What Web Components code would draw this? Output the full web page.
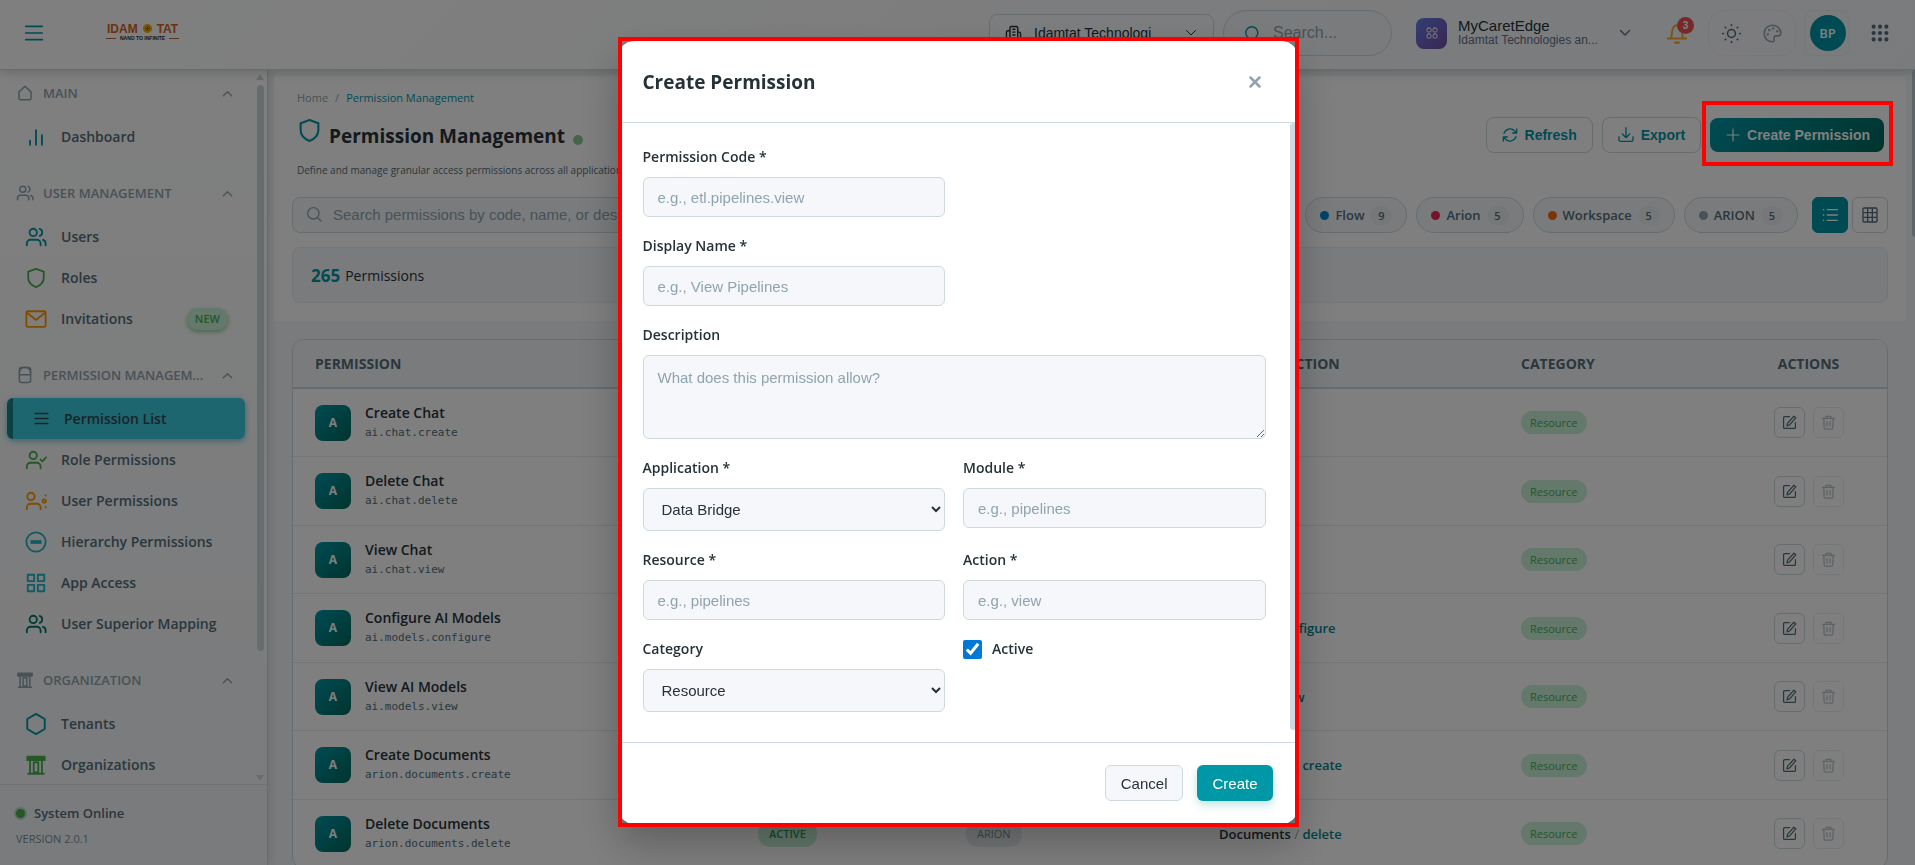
<!DOCTYPE html>
<html lang="en">
<head>
<meta charset="utf-8">
<meta name="viewport" content="width=device-width, initial-scale=1">
<title>Permission Management</title>
<style>
    :root {
        --font-ui: "Open Sans", "Noto Sans", sans-serif;
        --font-control: "Liberation Sans", Arial, sans-serif;
        --teal: #0097a7;
        --teal-dark: #00695c;
        --ink: #263238;
        --muted: #546e7a;
        --soft: #90a4ae;
        --line: #cfd8dc;
        --surface: #f5f7fa;
        --green: #4caf50;
        --mint: #c8f0d8;
    }

    body {
        margin: 0;
        height: 100vh;
        overflow: hidden;
        font-family: var(--font-ui);
        font-size: 14px;
        color: var(--ink);
    }
</style>
</head>
<body>
<permission-app></permission-app>

<script>
// Shared icon set, all drawn on a 24x24 grid
const ICONS = {
    home: '<path d="M4 10.5 12 3l8 7.5V19a2 2 0 0 1-2 2H6a2 2 0 0 1-2-2z"/>',
    users: '<circle cx="9" cy="7" r="4"/><path d="M2 21v-2a4 4 0 0 1 4-4h7a4 4 0 0 1 4 4v2M16 3.200a4 4 0 0 1 0 7.600M22.500 21v-2a4 4 0 0 0-3-3.800"/>',
    userCheck: '<circle cx="9" cy="7" r="4"/><path d="M2 21v-2a4 4 0 0 1 4-4h7a4 4 0 0 1 4 4v2M17 11.500l2 2 4-4.500"/>',
    userGear: '<circle cx="6.500" cy="7" r="4"/><path d="M2 21v-2a4 4 0 0 1 4-4h7a4 4 0 0 1 4 4v2"/><circle cx="21" cy="12" r="1.800"/><path d="M22.500 5.500v.5M22.500 18.500v.5"/>',
    bars: '<path d="M5.500 16v4.500M12 4.500v16M18.500 10v10.500"/>',
    shield: '<path d="M12 2 3.500 5v6.500c0 5 3.500 8.500 8.500 10.500 5-2 8.500-5.500 8.500-10.500V5z"/>',
    mail: '<rect x="1.500" y="3.500" width="21" height="17" rx="1.500"/><path d="m2 5 10 8 10-8"/>',
    lock: '<rect x="4.500" y="2" width="15" height="20" rx="3"/><path d="M4.500 11.500h15M4.500 9a7 7 0 0 1 15 0"/>',
    list: '<path d="M3 5h18M3 12h18M3 19h18"/>',
    minusCircle: '<circle cx="12" cy="12" r="10.500"/><path d="M6 12h12" stroke-width="4" stroke-linecap="butt"/>',
    apps: '<path d="M3 3h7v7H3zM14 3h7v7h-7zM3 14h7v7H3zM14 14h7v7h-7z"/>',
    roundApps: '<rect x="2" y="2" width="8" height="8" rx="2.500"/><rect x="14" y="2" width="8" height="8" rx="2.500"/><rect x="2" y="14" width="8" height="8" rx="2.500"/><rect x="14" y="14" width="8" height="8" rx="2.500"/>',
    pillars: '<path d="M2.500 3h19v3.500h-19zM5.500 7v14M18.500 7v14M9.500 9h5v11h-5zM3.500 21.500h17M3 5h18"/>',
    hexagon: '<path d="M12 1 21.500 6.500v11L12 23l-9.500-5.500v-11z"/>',
    up: '<path d="m3 17 9-9 9 9"/>',
    down: '<path d="m3 7 9 9 9-9"/>',
    menu: '<path d="M2 4h20M2 12h20M2 20h20"/>',
    search: '<circle cx="11" cy="11" r="8.500"/><path d="m17.500 17.500 5 5"/>',
    building: '<path d="M7 22V4a2 2 0 0 1 2-2h7a2 2 0 0 1 2 2v18M7 8H4a2 2 0 0 0-2 2v12h20V12a2 2 0 0 0-2-2h-2M11 6h3M11 10h3M11 14h3M11 22v-4h3v4"/>',
    bell: '<path d="M2 18h20M5 18c2-3 1-6 2-9.500C8 5 10 3.500 12 3.500s4 1.500 5 5c1 3.500 0 6.500 2 9.500"/><path d="M10 22.500h4" stroke-width="2.500"/>',
    sun: '<circle cx="12" cy="12" r="5"/><path d="M12 1v.6M12 22.400v.6M1 12h.6M22.400 12h.6M4.200 4.200l.4.4M19.400 19.400l.4.4M4.200 19.800l.4-.4M19.400 4.600l.4-.4" stroke-width="2.200"/>',
    palette: '<path d="M12 1.500C6 1.500 1.500 6 1.500 12S6 22.500 12 22.500c2 0 2.500-1.500 2-3-.8-2.500.5-4.500 3-4.500h2.500c2 0 3-1.300 3-3.500 0-5.500-4.500-10-10.500-10z"/><path d="M6 13v.1M8 7.500v.1M13 5.500v.1M18 9v.1" stroke-width="3"/>',
    dots: '<path d="M3.500 3.500v.01M12 3.500v.01M20.500 3.500v.01M3.500 12v.01M12 12v.01M20.500 12v.01M3.500 20.500v.01M12 20.500v.01M20.500 20.500v.01" stroke-width="5.500"/>',
    refresh: '<path d="M22 3v6h-6M2 21v-6h6M3 9.500a9.500 9.500 0 0 1 16-3.500l3 3M21 14.500A9.500 9.500 0 0 1 5 18l-3-3"/>',
    download: '<path d="M1.500 14.500V19a2.500 2.500 0 0 0 2.500 2.500h16a2.500 2.500 0 0 0 2.500-2.500v-4.500M12 1v15M6.500 10.500 12 16l5.500-5.500"/>',
    plus: '<path d="M12 2v20M2 12h20"/>',
    bullets: '<path d="M8 4h15M8 12h15M8 20h15M2 4h.6M2 12h.6M2 20h.6"/>',
    grid: '<path d="M3 1.500h18A1.500 1.500 0 0 1 22.500 3v18a1.500 1.500 0 0 1-1.500 1.500H3A1.500 1.500 0 0 1 1.500 21V3A1.500 1.500 0 0 1 3 1.500zM1.500 8.500h21M1.500 15.500h21M8.500 1.500v21M15.500 1.500v21"/>',
    edit: '<path d="M12 2.500H4.500a2 2 0 0 0-2 2v15a2 2 0 0 0 2 2h15a2 2 0 0 0 2-2V12M19 2l3 2.500L12 16l-4 1.500L9 13z"/>',
    trash: '<path d="M2.500 5.500h19M8 5V2h8v3M4.500 6l.5 14.500a2 2 0 0 0 2 2h10a2 2 0 0 0 2-2L19.500 6M9.500 10.500v7M14.500 10.500v7"/>',
    close: '<path d="m3 3 18 18M21 3 3 21"/>',
    flower: '<circle cx="12" cy="12" r="7" fill="#ffc107" stroke="#ffb300" stroke-width="6" stroke-dasharray="4 1.500"/><circle cx="12" cy="12" r="5" stroke="#b8860b" stroke-width="2"/><path d="M12 9v6M9 12h6" stroke="#8d5a00"/>'
};

class UiIcon extends HTMLElement {
    constructor() {
        super();
        this.attachShadow({ mode: 'open' });
        const weight = this.getAttribute('weight') || 2;
        this.shadowRoot.innerHTML = `
            <style>
                :host { display: inline-flex; flex: none; width: var(--icon-size, 20px); height: var(--icon-size, 20px); }
                svg { width: 100%; height: 100%; overflow: visible; }
            </style>
            <svg viewBox="0 0 24 24" fill="none" stroke="currentColor" stroke-width="${weight}" stroke-linecap="round" stroke-linejoin="round" aria-hidden="true">${ICONS[this.getAttribute('name')] || ''}</svg>
        `;
    }
}

class AppHeader extends HTMLElement {
    constructor() {
        super();
        this.attachShadow({ mode: 'open' });
        this.shadowRoot.innerHTML = `
            <style>
                :host {
                    display: block;
                    position: relative;
                    z-index: 2;
                    background: linear-gradient(135deg, #fff, #f5f7fa);
                    border-bottom: 1px solid var(--line);
                    box-shadow: 0 2px 10px rgba(38, 50, 56, .24);
                }
                header {
                    display: flex;
                    align-items: center;
                    gap: 9px;
                    height: 69px;
                    padding: 0 14px 3px 24px;
                    box-sizing: border-box;
                    font-family: var(--font-control);
                }
                button { background: none; border: 0; padding: 0; font: inherit; color: inherit; }
                .menu { --icon-size: 20px; display: flex; color: var(--teal); }
                .logo { display: grid; justify-items: center; margin: 0 auto 4px 53px; color: #d8651f; text-decoration: none; }
                .logo-name { display: flex; align-items: center; gap: 4px; font-size: 12px; line-height: 14px; font-weight: 700; --icon-size: 11px; }
                .logo-sub { display: flex; align-items: center; gap: 4px; font-size: 5px; line-height: 5px; font-weight: 700; color: var(--ink); }
                .logo-sub::before, .logo-sub::after { content: ""; width: 10px; height: 1px; background: #b06a3b; }
                .org { display: flex; align-items: center; gap: 12px; width: 225px; height: 38px; box-sizing: border-box; padding: 0 16px 0 15px; border: 1px solid var(--line); border-radius: 8px; --icon-size: 17px; }
                .org select { flex: 1; min-width: 0; appearance: none; border: 0; padding: 0; background: none; font: 14px var(--font-control); color: var(--ink); }
                .org ui-icon:last-child, .app ui-icon:last-child { --icon-size: 12px; }
                .search { display: flex; align-items: center; gap: 12px; width: 169px; height: 46px; box-sizing: border-box; padding: 0 20px; border: 1px solid var(--line); border-radius: 23px; background: var(--surface); color: var(--teal); --icon-size: 17px; }
                .search input { flex: 1; min-width: 0; border: 0; padding: 0; background: none; font: 16px var(--font-control); }
                .search input::placeholder { color: var(--soft); }
                .app { display: flex; align-items: center; gap: 11px; width: 244px; padding: 0 14px 0 15px; text-align: left; color: #64748b; }
                .app-mark { display: grid; place-items: center; width: 31px; height: 31px; border-radius: 8px; background: linear-gradient(135deg, #667eea, #764ba2); color: #fff; --icon-size: 16px; }
                .app-text { flex: 1; min-width: 0; font-size: 12px; line-height: 15px; }
                .app-text strong { display: block; font-size: 15px; font-weight: 400; color: var(--ink); }
                .bell { position: relative; display: grid; place-items: center; width: 45px; height: 46px; color: #ffa726; --icon-size: 22px; }
                .badge { position: absolute; top: 7px; right: 5px; width: 17px; height: 17px; border-radius: 50%; background: #ef5350; color: #fff; font-size: 10px; line-height: 17px; font-weight: 700; text-align: center; }
                .tools { display: flex; align-items: center; justify-content: center; gap: 22px; width: 88px; height: 46px; box-sizing: border-box; border: 1px solid #eceff1; border-radius: 16px; color: var(--muted); --icon-size: 19px; }
                .tools button { display: flex; }
                .tools button:last-child { color: var(--soft); }
                .profile { display: grid; place-items: center; width: 45px; height: 46px; box-sizing: border-box; border: 1px solid #eceff1; border-radius: 8px; }
                .avatar { width: 36px; height: 36px; border-radius: 50%; background: var(--teal); color: #fff; font: 600 13px/36px var(--font-ui); text-align: center; }
                .more { display: grid; place-items: center; width: 42px; color: var(--muted); --icon-size: 18px; }
            </style>
            <header>
                <button class="menu" aria-label="Toggle menu"><ui-icon name="menu"></ui-icon></button>
                <a class="logo" href="#">
                    <span class="logo-name">IDAM <ui-icon name="flower"></ui-icon> TAT</span>
                    <span class="logo-sub">NANO TO INFINITE</span>
                </a>
                <div class="org">
                    <ui-icon name="building"></ui-icon>
                    <select aria-label="Organization"><option>Idamtat Technologi</option></select>
                    <ui-icon name="down"></ui-icon>
                </div>
                <div class="search">
                    <ui-icon name="search"></ui-icon>
                    <input type="search" placeholder="Search..." aria-label="Search">
                </div>
                <button class="app">
                    <span class="app-mark"><ui-icon name="roundApps"></ui-icon></span>
                    <span class="app-text"><strong>MyCaretEdge</strong>Idamtat Technologies an...</span>
                    <ui-icon name="down" weight="3"></ui-icon>
                </button>
                <button class="bell" aria-label="Notifications"><ui-icon name="bell"></ui-icon><span class="badge">3</span></button>
                <div class="tools">
                    <button aria-label="Light mode"><ui-icon name="sun"></ui-icon></button>
                    <button aria-label="Theme colours"><ui-icon name="palette"></ui-icon></button>
                </div>
                <button class="profile"><span class="avatar">BP</span></button>
                <button class="more" aria-label="Apps"><ui-icon name="dots"></ui-icon></button>
            </header>
        `;
    }
}

class NavSection extends HTMLElement {
    constructor() {
        super();
        this.attachShadow({ mode: 'open' });
        this.shadowRoot.innerHTML = `
            <style>
                :host { display: block; margin-bottom: 18px; }
                button {
                    display: flex;
                    align-items: center;
                    gap: 9px;
                    width: 100%;
                    height: 36px;
                    margin-bottom: 5px;
                    padding: 0 23px 0 16px;
                    border: 0;
                    background: none;
                    font: 600 13px var(--font-ui);
                    color: var(--soft);
                    text-align: left;
                    --icon-size: 18px;
                }
                span { flex: 1; min-width: 0; white-space: nowrap; }
                ui-icon:last-child { --icon-size: 11px; }
            </style>
            <button aria-expanded="true">
                <ui-icon name="${this.getAttribute('icon')}"></ui-icon>
                <span>${this.getAttribute('label')}</span>
                <ui-icon name="up" weight="3"></ui-icon>
            </button>
            <slot></slot>
        `;
    }
}

class NavItem extends HTMLElement {
    constructor() {
        super();
        this.attachShadow({ mode: 'open' });
        this.shadowRoot.innerHTML = `
            <style>
                :host { display: block; }
                a {
                    display: flex;
                    align-items: center;
                    gap: 14px;
                    height: 41px;
                    padding: 0 28px 0 25px;
                    color: var(--muted);
                    text-decoration: none;
                    font-weight: 600;
                    --icon-size: 22px;
                }
                ui-icon { color: var(--tint, var(--teal)); }
                span { flex: 1; white-space: nowrap; }
                :host([active]) a {
                    margin: 0 11px 0 7px;
                    padding: 0 20px;
                    border-left: 6px solid #16858c;
                    border-radius: 6px;
                    background: #3acbde;
                    box-shadow: 0 2px 6px rgba(0, 151, 167, .5);
                    color: #37474f;
                    box-sizing: border-box;
                    --icon-size: 17px;
                    --tint: #37474f;
                }
            </style>
            <a href="#">
                <ui-icon name="${this.getAttribute('icon')}"></ui-icon>
                <span>${this.getAttribute('label')}</span>
                <slot></slot>
            </a>
        `;
    }
}

class AppSidebar extends HTMLElement {
    constructor() {
        super();
        this.attachShadow({ mode: 'open' });
        this.shadowRoot.innerHTML = `
            <style>
                :host {
                    display: flex;
                    flex-direction: column;
                    position: relative;
                    z-index: 1;
                    width: 268px;
                    box-sizing: border-box;
                    border-right: 1px solid var(--line);
                    background: linear-gradient(#fff, #f5f7fa);
                    box-shadow: 2px 0 8px rgba(38, 50, 56, .14);
                }
                .scroll { flex: 1; display: flex; min-height: 0; overflow: hidden; }
                nav { flex: 1; min-width: 0; padding-top: 5px; }
                /* Scroll track with its two arrows */
                .track { display: flex; flex-direction: column; flex: none; align-items: center; width: 8px; margin-right: 3px; padding: 4px 0 3px; }
                .arrow { border: 4px solid transparent; border-top-width: 0; border-bottom: 6px solid var(--line); }
                .arrow.down { border-bottom-width: 0; border-top: 6px solid var(--line); margin-top: auto; }
                .thumb { width: 7px; height: 80%; margin-top: 5px; border-radius: 4px; background: var(--line); }
                .new { padding: 0 8px; border-radius: 11px; background: var(--mint); box-shadow: 0 2px 4px rgba(76, 175, 80, .6); color: var(--green); font-size: 11px; line-height: 22px; font-weight: 600; }
                footer { height: 81px; box-sizing: border-box; padding: 15px 16px; border-top: 1px solid #e0e5e8; background: var(--surface); font-size: 11px; line-height: 26px; color: #78909c; }
                .status { display: flex; align-items: center; gap: 9px; font-size: 13px; font-weight: 600; color: var(--muted); }
                .status::before { content: ""; width: 9px; height: 9px; border-radius: 50%; background: var(--green); box-shadow: 0 0 0 2px #b9dfc0; }
            </style>
            <div class="scroll">
                <nav>
                    <nav-section icon="home" label="MAIN">
                        <nav-item icon="bars" label="Dashboard"></nav-item>
                    </nav-section>
                    <nav-section icon="users" label="USER MANAGEMENT">
                        <nav-item icon="users" label="Users"></nav-item>
                        <nav-item icon="shield" label="Roles" style="--tint: #4caf50"></nav-item>
                        <nav-item icon="mail" label="Invitations" style="--tint: #ff9800"><b class="new">NEW</b></nav-item>
                    </nav-section>
                    <nav-section icon="lock" label="PERMISSION MANAGEM...">
                        <nav-item active icon="list" label="Permission List"></nav-item>
                        <nav-item icon="userCheck" label="Role Permissions" style="--tint: #4caf50"></nav-item>
                        <nav-item icon="userGear" label="User Permissions" style="--tint: #ff9800"></nav-item>
                        <nav-item icon="minusCircle" label="Hierarchy Permissions" style="--tint: #26b6c8"></nav-item>
                        <nav-item icon="apps" label="App Access" style="--tint: #26b6c8"></nav-item>
                        <nav-item icon="users" label="User Superior Mapping" style="--tint: #00796b"></nav-item>
                    </nav-section>
                    <nav-section icon="pillars" label="ORGANIZATION">
                        <nav-item icon="hexagon" label="Tenants"></nav-item>
                        <nav-item icon="pillars" label="Organizations" style="--tint: #4caf50"></nav-item>
                    </nav-section>
                </nav>
                <div class="track" aria-hidden="true">
                    <i class="arrow"></i><i class="thumb"></i><i class="arrow down"></i>
                </div>
            </div>
            <footer>
                <div class="status">System Online</div>
                VERSION 2.0.1
            </footer>
        `;
    }
}

class PageHeader extends HTMLElement {
    constructor() {
        super();
        this.attachShadow({ mode: 'open' });
        const filters = [['Flow', 9, '#0288d1'], ['Arion', 5, '#e6294f'], ['Workspace', 5, '#f9690e'], ['ARION', 5, '#90a4ae']];
        this.shadowRoot.innerHTML = `
            <style>
                :host { display: block; padding: 14px 18px 18px; background: #fff; }
                .top { display: flex; align-items: center; gap: 9px; padding: 0 4px 0 5px; margin-bottom: 17px; }
                .heading { flex: 1; min-height: 90px; }
                .crumbs { display: flex; gap: 7px; font-size: 11px; line-height: 16px; color: var(--soft); }
                .crumbs a { color: inherit; text-decoration: none; }
                .crumbs b { font-weight: 500; color: var(--teal); }
                h1 { display: flex; gap: 7px; margin: 12px 0 8px; font-size: 19px; line-height: 36px; font-weight: 700; --icon-size: 25px; }
                h1 ui-icon { color: var(--teal); }
                h1::after { content: ""; align-self: center; width: 10px; height: 10px; margin: 7px 0 0 1px; border-radius: 50%; background: #8cc98f; }
                p { margin: 0; font-size: 10px; line-height: 16px; color: var(--muted); }
                button { font: 700 14px var(--font-control); }
                .action { display: flex; align-items: center; gap: 7px; height: 36px; padding: 0 15px; border: 1px solid var(--line); border-radius: 8px; background: #fff; color: var(--teal); --icon-size: 16px; }
                .create { position: relative; }
                .create .action { height: 34px; padding: 0 14px 0 16px; border: 0; background: linear-gradient(135deg, var(--teal), var(--teal-dark)); color: #fff; --icon-size: 14px; }
                .create highlight-frame { inset: -17px -9px -14px -8px; }
                .filters { display: flex; align-items: center; gap: 9px; margin-bottom: 14px; }
                .search { flex: 1; display: flex; align-items: center; gap: 11px; height: 36px; box-sizing: border-box; padding: 0 13px 2px; border: 1px solid var(--line); border-radius: 8px; background: var(--surface); color: var(--soft); --icon-size: 16px; }
                .search input { flex: 1; border: 0; padding: 0; background: none; font: 15px var(--font-control); }
                .search input::placeholder { color: var(--soft); }
                .pill { display: flex; align-items: center; gap: 6px; height: 36px; padding: 0 14px; border: 1px solid var(--line); border-radius: 18px; background: var(--surface); font: 600 13px var(--font-ui); color: var(--muted); }
                .pill i { width: 9px; height: 9px; border-radius: 50%; }
                .pill small { width: 22px; border-radius: 10px; background: #eceff1; font-size: 11px; line-height: 19px; text-align: center; }
                .view { display: flex; gap: 4px; margin-left: 5px; }
                .view button { display: grid; place-items: center; width: 36px; height: 36px; padding: 0; border: 1px solid var(--line); border-radius: 6px; background: #fff; color: var(--muted); --icon-size: 16px; }
                .view button:first-child { border-color: var(--teal); background: var(--teal); color: #fff; }
                .summary { display: flex; align-items: center; gap: 5px; height: 56px; box-sizing: border-box; padding: 0 18px; border: 1px solid #e8ecef; border-radius: 8px; background: var(--surface); font-weight: 500; }
                .summary b { font-size: 17px; color: var(--teal); }
            </style>
            <div class="top">
                <div class="heading">
                    <div class="crumbs"><a href="#">Home</a><span>/</span><b>Permission Management</b></div>
                    <h1><ui-icon name="shield"></ui-icon>Permission Management</h1>
                    <p>Define and manage granular access permissions across all applications</p>
                </div>
                <button class="action"><ui-icon name="refresh"></ui-icon>Refresh</button>
                <button class="action"><ui-icon name="download"></ui-icon>Export</button>
                <div class="create">
                    <button class="action"><ui-icon name="plus"></ui-icon>Create Permission</button>
                    <highlight-frame></highlight-frame>
                </div>
            </div>
            <div class="filters">
                <div class="search">
                    <ui-icon name="search"></ui-icon>
                    <input type="search" placeholder="Search permissions by code, name, or description..." aria-label="Search permissions">
                </div>
                ${filters.map(([name, count, color]) => `<button class="pill"><i style="background: ${color}"></i>${name} <small>${count}</small></button>`).join('')}
                <div class="view">
                    <button aria-label="List view"><ui-icon name="bullets"></ui-icon></button>
                    <button aria-label="Grid view"><ui-icon name="grid"></ui-icon></button>
                </div>
            </div>
            <div class="summary"><b>265</b> Permissions</div>
        `;
    }
}

class PermissionTable extends HTMLElement {
    constructor() {
        super();
        this.attachShadow({ mode: 'open' });
        const rows = [
            ['Create Chat', 'ai.chat.create', 'AI', 'Chat', 'create'],
            ['Delete Chat', 'ai.chat.delete', 'AI', 'Chat', 'delete'],
            ['View Chat', 'ai.chat.view', 'AI', 'Chat', 'view'],
            ['Configure AI Models', 'ai.models.configure', 'AI', 'Models', 'configure'],
            ['View AI Models', 'ai.models.view', 'AI', 'Models', 'view'],
            ['Create Documents', 'arion.documents.create', 'ARION', 'Documents', 'create'],
            ['Delete Documents', 'arion.documents.delete', 'ARION', 'Documents', 'delete']
        ];
        this.shadowRoot.innerHTML = `
            <style>
                :host { display: block; margin: 18px 18px 0; border: 1px solid var(--line); border-radius: 12px; background: #fff; overflow: hidden; }
                table { width: 100%; table-layout: fixed; border-collapse: separate; border-spacing: 0; }
                th, td { box-sizing: border-box; padding: 0 22px; text-align: left; white-space: nowrap; }
                th { height: 49px; border-bottom: 2px solid var(--line); background: var(--surface); font-size: 14px; font-weight: 700; color: var(--muted); }
                td { height: 68px; border-bottom: 1px solid #e6eaed; font-size: 13px; }
                tr:nth-child(even) td { height: 69px; }
                .app { width: 253px; }
                .state { width: 208px; }
                .path { width: 302px; }
                .category { width: 231px; }
                .actions { width: 157px; text-align: center; }
                .cell { display: flex; align-items: center; gap: 14px; }
                .mark { width: 36px; height: 36px; border-radius: 8px; background: linear-gradient(135deg, var(--teal), var(--teal-dark)); color: #fff; font-size: 12px; line-height: 36px; font-weight: 700; text-align: center; }
                .name { font-size: 14px; line-height: 20px; font-weight: 600; }
                code { display: block; font: 11px/20px "DejaVu Sans Mono", monospace; color: var(--muted); }
                .tag { display: inline-block; padding: 0 9px; border-radius: 12px; background: var(--mint); color: var(--green); font-size: 11px; line-height: 23px; }
                .tag.on { padding: 0 11px; color: #1f9a5b; font-weight: 600; line-height: 26px; }
                .tag.off { padding: 0 11px; background: #e9ecee; color: #78909c; line-height: 26px; }
                .path b { font-weight: 600; }
                .path span { color: var(--soft); }
                .path em { font-style: normal; font-weight: 600; color: #00838f; }
                .buttons { display: flex; justify-content: center; gap: 8px; }
                button { display: grid; place-items: center; width: 31px; height: 31px; padding: 0; border: 1px solid var(--line); border-radius: 6px; background: #fff; color: var(--muted); --icon-size: 15px; }
                button:disabled { opacity: .4; }
            </style>
            <table>
                <thead>
                    <tr><th>PERMISSION</th><th class="state">STATUS</th><th class="app">APPLICATION</th><th class="path">MODULE/ACTION</th><th class="category">CATEGORY</th><th class="actions">ACTIONS</th></tr>
                </thead>
                <tbody>
                    ${rows.map(([name, code, app, resource, action]) => `
                        <tr>
                            <td><div class="cell"><span class="mark">A</span><div><div class="name">${name}</div><code>${code}</code></div></div></td>
                            <td><span class="tag on">ACTIVE</span></td>
                            <td><span class="tag off">${app}</span></td>
                            <td class="path"><b>${resource}</b> <span>/</span> <em>${action}</em></td>
                            <td><span class="tag">Resource</span></td>
                            <td><div class="buttons">
                                <button aria-label="Edit ${name}"><ui-icon name="edit"></ui-icon></button>
                                <button disabled aria-label="Delete ${name}"><ui-icon name="trash"></ui-icon></button>
                            </div></td>
                        </tr>`).join('')}
                </tbody>
            </table>
        `;
    }
}

// Red callout drawn over whatever it wraps; the user sets its inset
class HighlightFrame extends HTMLElement {
    constructor() {
        super();
        this.attachShadow({ mode: 'open' });
        this.shadowRoot.innerHTML = `
            <style>
                :host { position: absolute; z-index: 20; border: 4px solid #f00; pointer-events: none; }
            </style>
        `;
    }
}

class PermissionDialog extends HTMLElement {
    constructor() {
        super();
        this.attachShadow({ mode: 'open' });
        this.shadowRoot.innerHTML = `
            <style>
                :host { position: fixed; inset: 0; z-index: 10; display: grid; place-items: center; background: rgba(0, 0, 0, .5); }
                .frame { position: relative; width: 680px; max-width: 100%; }
                highlight-frame { inset: -4px -1px -3px 0; }
                form { border: 1px solid #fff; border-radius: 16px; background: #fff; box-shadow: 0 20px 40px rgba(0, 0, 0, .25); overflow: hidden; }
                header { display: flex; align-items: center; justify-content: space-between; height: 80px; padding: 0 36px 0 24px; border-bottom: 1px solid var(--line); }
                h2 { margin: 0; font-size: 19px; line-height: 28px; font-weight: 700; }
                header button { display: flex; padding: 0; border: 0; background: none; color: var(--soft); --icon-size: 12px; }
                .body { display: flex; }
                .fields { flex: 1; display: grid; grid-template-columns: 1fr 1fr; gap: 19px 18px; align-items: start; padding: 24px 24px 30px; }
                .field { display: grid; gap: 10px; grid-column: 1; }
                .field.right { grid-column: 2; }
                .field.wide { grid-column: 1 / 3; }
                .bar { width: 7px; margin-bottom: 12px; border-radius: 4px; background: var(--line); }
                label { font-size: 14px; line-height: 20px; font-weight: 600; }
                input, textarea, select, footer button { font: 15px var(--font-control); color: var(--ink); }
                .field input, textarea, select { width: 100%; height: 40px; box-sizing: border-box; margin: 0; padding: 0 14px; border: 1px solid var(--line); border-radius: 6px; background: var(--surface); }
                .field select { height: 43px; }
                .field textarea { display: block; height: 84px; padding: 13px 14px; resize: vertical; }
                ::placeholder { color: var(--soft); }
                .check { display: flex; align-items: center; gap: 10px; grid-column: 2; }
                .check input { width: 19px; height: 19px; margin: 0; accent-color: #0078d7; }
                footer { display: flex; justify-content: flex-end; align-items: center; gap: 14px; height: 80px; padding: 0 24px; border-top: 1px solid var(--line); }
                footer button { height: 36px; padding: 0 15px; border: 1px solid var(--line); border-radius: 6px; background: var(--surface); }
                footer .primary { border: 0; background: var(--teal); box-shadow: 0 4px 8px rgba(0, 151, 167, .25); color: #fff; }
            </style>
            <div class="frame">
                <form role="dialog" aria-labelledby="title">
                    <header>
                        <h2 id="title">Create Permission</h2>
                        <button type="button" aria-label="Close"><ui-icon name="close" weight="5"></ui-icon></button>
                    </header>
                    <div class="body">
                        <div class="fields">
                            <div class="field"><label for="code">Permission Code *</label><input id="code" placeholder="e.g., etl.pipelines.view"></div>
                            <div class="field"><label for="name">Display Name *</label><input id="name" placeholder="e.g., View Pipelines"></div>
                            <div class="field wide"><label for="description">Description</label><textarea id="description" placeholder="What does this permission allow?"></textarea></div>
                            <div class="field"><label for="application">Application *</label><select id="application"><option>Data Bridge</option></select></div>
                            <div class="field right"><label for="module">Module *</label><input id="module" placeholder="e.g., pipelines"></div>
                            <div class="field"><label for="resource">Resource *</label><input id="resource" placeholder="e.g., pipelines"></div>
                            <div class="field right"><label for="action">Action *</label><input id="action" placeholder="e.g., view"></div>
                            <div class="field"><label for="category">Category</label><select id="category"><option>Resource</option></select></div>
                            <label class="check"><input type="checkbox" checked>Active</label>
                        </div>
                        <div class="bar" aria-hidden="true"></div>
                    </div>
                    <footer>
                        <button type="button">Cancel</button>
                        <button type="button" class="primary">Create</button>
                    </footer>
                </form>
                <highlight-frame></highlight-frame>
            </div>
        `;
    }
}

class PermissionApp extends HTMLElement {
    constructor() {
        super();
        this.attachShadow({ mode: 'open' });
        this.shadowRoot.innerHTML = `
            <style>
                :host { display: flex; flex-direction: column; height: 100vh; }
                .layout { flex: 1; display: flex; min-height: 0; }
                main { flex: 1; min-width: 0; padding: 6px; overflow: hidden; background: var(--surface); }
                .bar { width: 3px; background: var(--surface); }
                .bar i { display: block; height: 21%; border-radius: 3px 0 0 3px; background: #b9cdd0; }
            </style>
            <app-header></app-header>
            <div class="layout">
                <app-sidebar></app-sidebar>
                <main>
                    <page-header></page-header>
                    <permission-table></permission-table>
                </main>
                <div class="bar" aria-hidden="true"><i></i></div>
            </div>
            <permission-dialog></permission-dialog>
        `;
    }
}

customElements.define('ui-icon', UiIcon);
customElements.define('highlight-frame', HighlightFrame);
customElements.define('app-header', AppHeader);
customElements.define('nav-section', NavSection);
customElements.define('nav-item', NavItem);
customElements.define('app-sidebar', AppSidebar);
customElements.define('page-header', PageHeader);
customElements.define('permission-table', PermissionTable);
customElements.define('permission-dialog', PermissionDialog);
customElements.define('permission-app', PermissionApp);
</script>
</body>
</html>
